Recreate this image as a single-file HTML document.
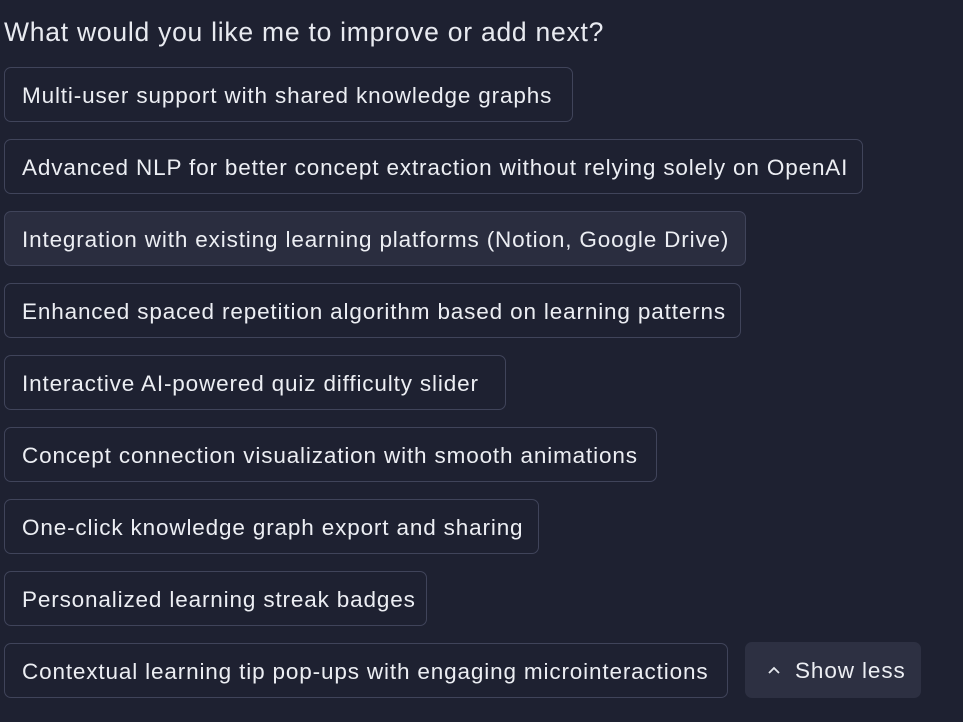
<!DOCTYPE html>
<html><head><meta charset="utf-8"><style>
html,body{margin:0;padding:0;background:#1e2131;width:963px;height:722px;overflow:hidden;font-family:"Liberation Sans",sans-serif;color:#e6e8ee}
h1{position:absolute;left:4px;top:15px;margin:0;font-weight:normal;font-size:26.5px;letter-spacing:0.75px;line-height:34px;color:#e8eaf0}
.b{position:absolute;left:4px;height:55px;box-sizing:border-box;border:1.5px solid #40445a;border-radius:7px;font-size:22.5px;letter-spacing:0.85px;line-height:55px;padding-left:17px;white-space:nowrap;overflow:hidden;color:#eceef3}
.h{background:#2a2d3f}
.s{position:absolute;left:745px;top:642px;width:176px;height:56px;background:#2d3042;border-radius:7px;font-size:22.5px;letter-spacing:0.9px;line-height:58px;color:#eceef3}
</style></head><body>
<h1>What would you like me to improve or add next?</h1>
<div class="b" style="top:67px;width:569px">Multi-user support with shared knowledge graphs</div>
<div class="b" style="top:139px;width:859px">Advanced NLP for better concept extraction without relying solely on OpenAI</div>
<div class="b h" style="top:211px;width:742px">Integration with existing learning platforms (Notion, Google Drive)</div>
<div class="b" style="top:283px;width:737px">Enhanced spaced repetition algorithm based on learning patterns</div>
<div class="b" style="top:355px;width:502px">Interactive AI-powered quiz difficulty slider</div>
<div class="b" style="top:427px;width:653px">Concept connection visualization with smooth animations</div>
<div class="b" style="top:499px;width:535px">One-click knowledge graph export and sharing</div>
<div class="b" style="top:571px;width:423px">Personalized learning streak badges</div>
<div class="b" style="top:643px;width:724px">Contextual learning tip pop-ups with engaging microinteractions</div>
<div class="s"><svg style="position:absolute;left:22px;top:23px" width="14" height="10" viewBox="0 0 14 10"><path d="M2 8 L7 3 L12 8" fill="none" stroke="#e6e8ee" stroke-width="1.8"/></svg><span style="position:absolute;left:50px">Show less</span></div>
</body></html>
